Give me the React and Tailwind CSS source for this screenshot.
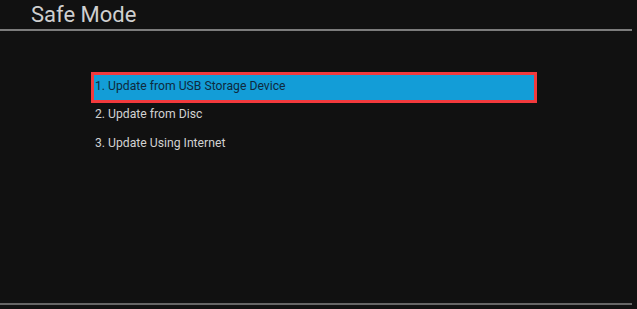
import React from 'react';

const items = [
  '1. Update from USB Storage Device',
  '2. Update from Disc',
  '3. Update Using Internet',
];

const App = () => {
  return (
    <div className="w-[637px] h-[309px] bg-[#111111] flex flex-col font-['Roboto',sans-serif] overflow-hidden">

      {/* Header */}
      <div className="h-[29px] pl-[31px] flex items-end">
        <h1 className="text-[22px] leading-[29px] text-[#cfcfcf]">Safe Mode</h1>
      </div>
      <div className="w-[632px] h-[2px] bg-[#7c7c7c]" />

      {/* Menu */}
      <div className="flex-1 pt-[41px] pl-[91px]">
        <div className="w-[446px] h-[31px] border-[3px] border-[#f23a3d] bg-[#139dd7] flex items-center pl-[1px] pb-[2px]">
          <span className="text-[12.2px] text-[#0f2a3d]">{items[0]}</span>
        </div>
        <div className="h-[23px] flex items-center pl-[4px]">
          <span className="text-[12.2px] text-[#d2d2d2]">{items[1]}</span>
        </div>
        <div className="h-[34px] flex items-center pl-[4px]">
          <span className="text-[12.2px] text-[#d2d2d2]">{items[2]}</span>
        </div>
      </div>

      {/* Footer line */}
      <div className="w-[632px] h-[2px] bg-[#666666] mb-[4px]" />
    </div>
  );
};

export default App;
